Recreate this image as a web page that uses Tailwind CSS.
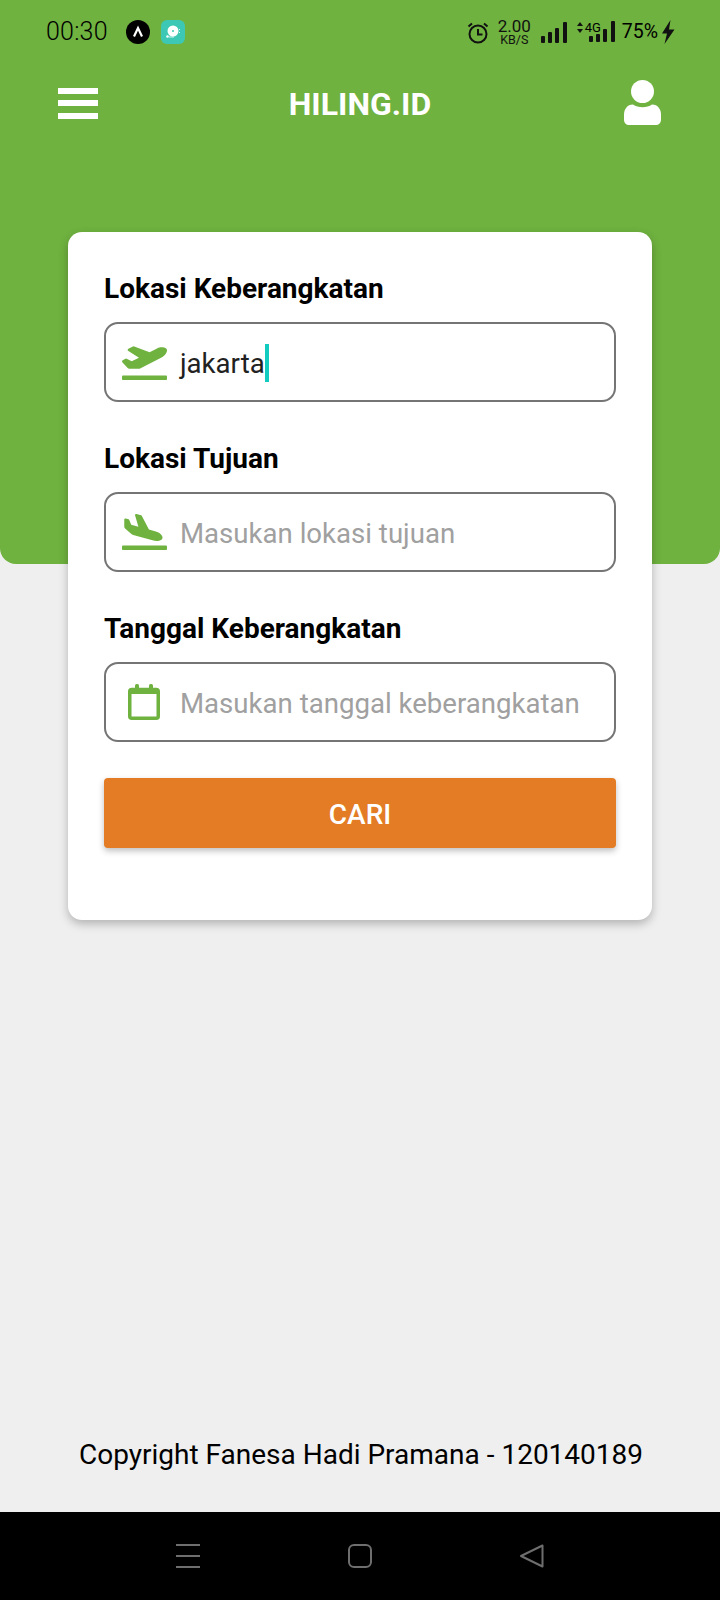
<!DOCTYPE html>
<html lang="id">
<head>
  <meta charset="utf-8">
  <script src="https://cdn.jsdelivr.net/npm/@tailwindcss/browser@4"></script>
</head>
<body>
  <div class="w-[720px] h-[1600px] flex flex-col bg-[#efefef] overflow-hidden font-['Roboto',sans-serif]">

    <!-- green header -->
    <div class="h-[564px] shrink-0 bg-[#6fb23f] rounded-b-[16px]">
      <!-- status bar -->
      <div class="h-[64px] flex items-center pl-[46px] pr-[45px] text-black">
        <span class="text-[25px] font-light w-[80px] tracking-[0.2px]">00:30</span>
        <div class="w-[24px] h-[24px] rounded-full bg-black flex items-center justify-center">
          <svg width="14" height="14" viewBox="0 0 14 14"><path d="M3 11.500 7 3l4 8.500" fill="none" stroke="#fff" stroke-width="2.200"/></svg>
        </div>
        <div class="ml-[11px] w-[24px] h-[24px] rounded-[6px] bg-[#3cc8b4] flex items-center justify-center">
          <svg width="20" height="20" viewBox="0 0 20 20"><circle cx="10" cy="9" r="5.500" fill="#fff"/><circle cx="10" cy="9" r="1" fill="#3cc8b4"/><circle cx="4.500" cy="14.500" r="1.300" fill="#fff"/><path d="M6 15h5M16.500 7v1M16.500 10v1" stroke="#fff" stroke-width="0.800"/></svg>
        </div>
        <div class="ml-auto flex items-center">
          <svg width="22" height="23" viewBox="0 0 22 23" fill="none" stroke="#111" stroke-width="2"><circle cx="11" cy="13" r="8.500"/><path d="M11 8v5.500h4.500M1.500 5.500 5 2.500M20.500 5.500 17 2.500"/></svg>
          <div class="ml-[7px] w-[37px] flex flex-col items-center text-[#111]">
            <span class="text-[17px] leading-[13px]">2.00</span>
            <span class="text-[12.500px] leading-[11px] mt-[1px]">KB/S</span>
          </div>
          <svg class="ml-[8px]" width="26" height="21" viewBox="0 0 26 21" fill="#111"><rect x="0" y="14" width="4" height="7" rx="1"/><rect x="7" y="10" width="4" height="11" rx="1"/><rect x="14" y="6" width="4" height="15" rx="1"/><rect x="22" y="0" width="4" height="21" rx="1"/></svg>
          <div class="ml-[10px] relative w-[40px] h-[22px]">
            <svg class="absolute left-0 top-[1px]" width="6" height="11" viewBox="0 0 6 11" fill="#111"><path d="M3 0 6 4H0zM3 11 0 7h6z"/></svg>
            <span class="absolute left-[8px] top-[0px] text-[13px] leading-[13px]">4G</span>
            <svg class="absolute left-[12px] top-0" width="26" height="21" viewBox="0 0 26 21" fill="#111"><rect x="0" y="15" width="4" height="6" rx="1"/><rect x="7" y="13" width="4" height="8" rx="1"/><rect x="14" y="8" width="4" height="13" rx="1"/><rect x="22" y="0" width="4" height="21" rx="1"/></svg>
          </div>
          <span class="ml-[5px] text-[19.500px] font-normal leading-none">75%</span>
          <svg class="ml-[3px]" width="14" height="24" viewBox="0 0 14 24" fill="#111"><path d="M9.500 0 1 13.500h5L3.500 24 13.500 9.500H8z"/></svg>
        </div>
      </div>
      <!-- app bar -->
      <div class="relative h-[80px] flex items-center justify-between pl-[58px] pr-[59px]">
        <div class="w-[40px] flex flex-col gap-[6.500px] mt-[-2px]">
          <div class="h-[6px] bg-white"></div>
          <div class="h-[6px] bg-white"></div>
          <div class="h-[6px] bg-white"></div>
        </div>
        <span class="absolute left-0 right-0 text-center text-[32px] font-bold text-white mt-[-1px] pointer-events-none">HILING.ID</span>
        <svg width="37" height="45" viewBox="0 0 37 45" fill="#fff" class="mt-[-4px]"><circle cx="18.500" cy="11.500" r="11.500"/><path d="M9 24.500c5 3.500 14 3.500 19 0 6 0 9 5 9 10v5c0 3.500-2 5.500-5.500 5.500h-26C2 45 0 43 0 39.500v-5c0-5 3-10 9-10z"/></svg>
      </div>
    </div>

    <!-- form card -->
    <div class="relative mt-[-332px] mx-[68px] h-[688px] shrink-0 bg-white rounded-[14px] shadow-[0_4px_10px_rgba(0,0,0,0.25)] px-[36px] pt-[37px]">
      <label class="block text-[28px] leading-[40px] font-bold text-black h-[53px]">Lokasi Keberangkatan</label>
      <div class="h-[80px] border-2 border-[#757575] rounded-[14px] flex items-center pl-[16px]">
        <svg class="shrink-0" width="45" height="36" viewBox="0 0 640 512" fill="#6fb23f"><path d="M624 448H16c-8.840 0-16 7.160-16 16v32c0 8.840 7.160 16 16 16h608c8.840 0 16-7.160 16-16v-32c0-8.840-7.160-16-16-16zM80.550 341.270c6.280 7.020 15.060 10.730 24.100 10.720l130.540-.18a65.620 65.620 0 0 0 29.640-7.090l290.960-147.650c26.740-13.570 50.710-32.940 67.020-58.310 18.310-28.480 20.300-49.090 13.070-63.650-7.210-14.570-24.740-25.270-58.250-27.450-29.850-1.940-59.540 5.920-86.280 19.480l-98.510 49.990-218.700-82.060a17.799 17.799 0 0 0-18-1.110L90.620 67.290c-10.670 5.410-13.250 19.650-5.170 28.530l156.220 98.100-103.210 52.380-72.350-36.470a17.804 17.804 0 0 0-16.120.03L9.910 230.220c-10.440 5.300-13.190 19.120-5.570 28.080l76.210 82.970z"/></svg>
        <span class="ml-[13px] text-[27.600px] text-[#212121] mt-[4px]">jakarta</span>
        <span class="w-[4px] h-[38px] bg-[#12cdbf] mt-[1px]"></span>
      </div>

      <label class="block mt-[37px] text-[28px] leading-[40px] font-bold text-black h-[53px]">Lokasi Tujuan</label>
      <div class="h-[80px] border-2 border-[#757575] rounded-[14px] flex items-center pl-[16px]">
        <svg class="shrink-0" width="45" height="36" viewBox="0 0 640 512" fill="#6fb23f"><path d="M624 448H16c-8.840 0-16 7.160-16 16v32c0 8.840 7.160 16 16 16h608c8.840 0 16-7.160 16-16v-32c0-8.840-7.160-16-16-16zM44.810 205.660l88.740 80a62.607 62.607 0 0 0 25.470 13.930l287.600 78.350c26.480 7.210 54.560 8.720 81 1.360 29.670-8.270 43.440-21.210 47.250-35.710 3.830-14.500-1.730-32.710-23.370-54.960-19.280-19.820-44.350-32.790-70.830-40l-97.510-26.560L282.800 30.220c-1.510-5.810-5.950-10.350-11.660-11.910L206.050.58c-10.560-2.880-20.900 5.320-20.710 16.440l47.920 164.210-102.200-27.840-27.590-67.880c-1.930-4.890-6.010-8.570-11.020-9.930L52.720 64.750c-10.340-2.820-20.530 5-20.720 15.880l.23 101.780c.19 8.910 6.030 17.340 12.580 23.250z"/></svg>
        <span class="ml-[13px] text-[27.600px] text-[#a0a0a0] mt-[4px]">Masukan lokasi tujuan</span>
      </div>

      <label class="block mt-[37px] text-[28px] leading-[40px] font-bold text-black h-[53px]">Tanggal Keberangkatan</label>
      <div class="h-[80px] border-2 border-[#757575] rounded-[14px] flex items-center pl-[22px]">
        <svg class="shrink-0" width="32" height="36" viewBox="0 0 32 36" fill="none"><rect x="1.750" y="5.500" width="28.500" height="28.750" rx="2" stroke="#6fb23f" stroke-width="3.500"/><rect x="2" y="5" width="28" height="5" fill="#6fb23f"/><rect x="7" y="0" width="4" height="7" rx="1.500" fill="#6fb23f"/><rect x="21" y="0" width="4" height="7" rx="1.500" fill="#6fb23f"/></svg>
        <span class="ml-[20px] text-[27.600px] text-[#a0a0a0] whitespace-nowrap mt-[4px]">Masukan tanggal keberangkatan</span>
      </div>

      <button class="mt-[36px] w-full h-[70px] bg-[#e37c25] rounded-[4px] shadow-[0_3px_6px_rgba(0,0,0,0.25)] text-white text-[28px] font-medium pt-[4px]">CARI</button>
    </div>

    <!-- footer -->
    <div class="mt-auto h-[80px] flex items-start justify-center text-[28px] text-black leading-[40px] pt-[3px] pl-[2px]">Copyright Fanesa Hadi Pramana - 120140189</div>

    <!-- android nav bar -->
    <div class="h-[88px] shrink-0 bg-black flex items-center">
      <svg class="ml-[176px]" width="24" height="24" viewBox="0 0 24 24" stroke="#6e6e6e" stroke-width="2"><path d="M0 1h24M0 12h24M0 23h24"/></svg>
      <svg class="ml-[148px]" width="24" height="24" viewBox="0 0 24 24" fill="none" stroke="#6e6e6e" stroke-width="2"><rect x="1" y="1" width="22" height="22" rx="5"/></svg>
      <svg class="ml-[148px]" width="24" height="24" viewBox="0 0 24 24" fill="none" stroke="#6e6e6e" stroke-width="2" stroke-linejoin="round"><path d="M22.500 1.500v21L1 12z"/></svg>
    </div>
  </div>
</body>
</html>
